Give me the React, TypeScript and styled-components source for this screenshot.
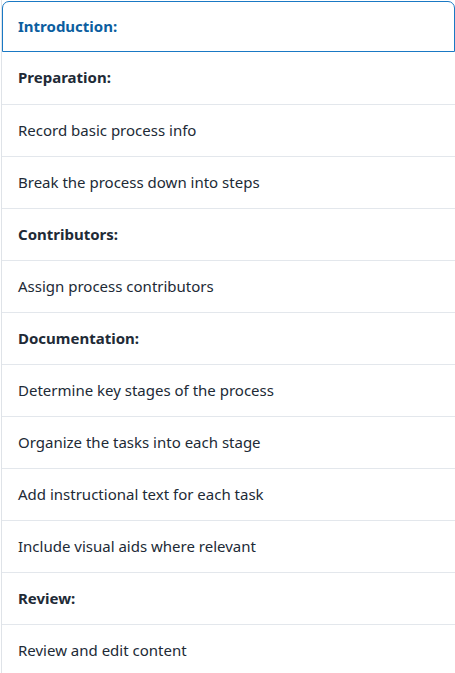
import React from "react";
import styled, { createGlobalStyle } from "styled-components";

const Global = createGlobalStyle`
  html, body {
    margin: 0;
    padding: 0;
    overflow: hidden;
    background: #ffffff;
  }
  body {
    font-family: "Noto Sans", "Open Sans", "Liberation Sans", sans-serif;
  }
`;

const List = styled.ul`
  list-style: none;
  margin: 0 0 0 1px;
  padding: 1px 0 0 0;
  width: 455px;
  box-sizing: border-box;
  border-left: 1px solid #dfe3e8;
  border-right: 1px solid #dfe3e8;
`;

const ActiveItem = styled.li`
  box-sizing: border-box;
  height: 51px;
  display: flex;
  align-items: center;
  padding: 0 0 2px 15px;
  border: 1px solid #1a79c4;
  border-radius: 7px 7px 0 0;
  color: #0b5e9f;
  font-size: 15px;
  font-weight: 700;
`;

const Item = styled.li<{ $heading?: boolean }>`
  box-sizing: border-box;
  height: 52px;
  display: flex;
  align-items: center;
  padding: 0 0 2px 16px;
  color: #212a36;
  font-size: 15px;
  font-weight: ${(p) => (p.$heading ? 700 : 400)};

  & + & {
    border-top: 1px solid #e3e7ec;
  }
`;

const items: { text: string; heading?: boolean }[] = [
  { text: "Preparation:", heading: true },
  { text: "Record basic process info" },
  { text: "Break the process down into steps" },
  { text: "Contributors:", heading: true },
  { text: "Assign process contributors" },
  { text: "Documentation:", heading: true },
  { text: "Determine key stages of the process" },
  { text: "Organize the tasks into each stage" },
  { text: "Add instructional text for each task" },
  { text: "Include visual aids where relevant" },
  { text: "Review:", heading: true },
  { text: "Review and edit content" },
];

export default function App() {
  return (
    <>
      <Global />
      <List>
        <ActiveItem>Introduction:</ActiveItem>
        {items.map((it) => (
          <Item key={it.text} $heading={it.heading}>
            {it.text}
          </Item>
        ))}
      </List>
    </>
  );
}
